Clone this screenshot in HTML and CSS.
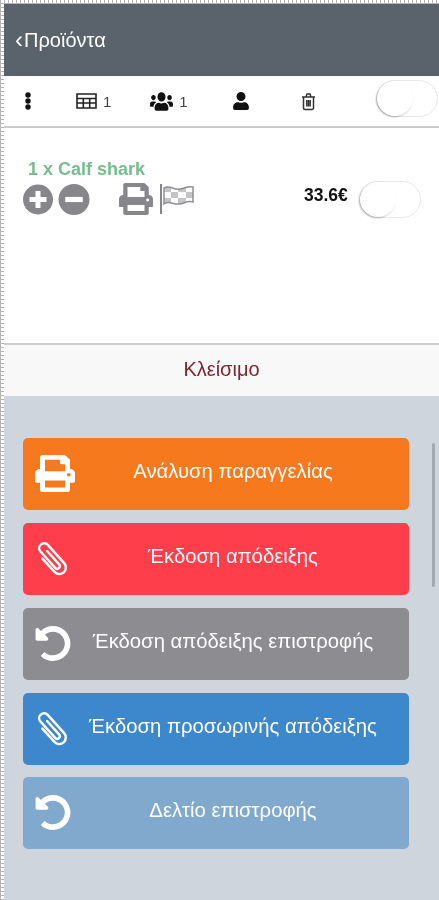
FILE: index.html
```html
<!DOCTYPE html>
<html lang="el">
<head>
  <meta charset="UTF-8">
  <meta name="viewport" content="width=device-width, initial-scale=1.0">
  <title>Προϊόντα</title>
  <link rel="stylesheet" href="styles.css">
</head>
<body>
  <svg class="sprites" width="0" height="0">
    <symbol id="i-print" viewBox="0 0 512 512" preserveAspectRatio="none">
      <path d="M448 192V77.25c0-8.49-3.37-16.62-9.37-22.63L393.37 9.37c-6-6-14.14-9.37-22.63-9.37H96C78.33 0 64 14.33 64 32v160c-35.35 0-64 28.65-64 64v112c0 8.84 7.16 16 16 16h48v96c0 17.67 14.33 32 32 32h320c17.67 0 32-14.33 32-32v-96h48c8.84 0 16-7.16 16-16V256c0-35.35-28.65-64-64-64zm-64 256H128v-96h256v96zm0-224H128V64h192v48c0 8.84 7.16 16 16 16h48v96zm48 72c-13.25 0-24-10.75-24-24 0-13.26 10.75-24 24-24s24 10.74 24 24c0 13.25-10.75 24-24 24z"/>
    </symbol>
    <symbol id="i-undo" viewBox="0 0 512 512">
      <path d="M255.545 8c-66.269.119-126.438 26.233-170.86 68.685L48.971 40.971C33.851 25.851 8 36.559 8 57.941V192c0 13.255 10.745 24 24 24h134.059c21.382 0 32.09-25.851 16.971-40.971l-41.75-41.75c30.864-28.899 70.801-44.907 113.23-45.273 92.398-.798 170.283 73.977 169.484 169.442C423.236 348.009 349.816 424 256 424c-41.127 0-79.997-14.678-110.63-41.556-4.743-4.161-11.906-3.908-16.368.553L89.34 422.659c-4.872 4.872-4.631 12.815.482 17.433C133.798 479.813 192.074 504 256 504c136.966 0 247.999-111.033 248-247.998C504.001 119.193 392.354 7.755 255.545 8z"/>
    </symbol>
    <symbol id="i-clip" viewBox="0 1 44 44">
      <g transform="rotate(-42 22 23) translate(4 4)" fill="none" stroke="currentColor" stroke-width="3" stroke-linecap="round">
        <path d="M20.500 9V31a3.200 3.200 0 0 1-6.400 0V4a6 6 0 0 1 12 0V34a8 8 0 0 1-16 0V12"/>
      </g>
    </symbol>
    <clipPath id="flag-shape">
      <path d="M5 5c6-4 10 3 16 1 5-1 9-3 13-2v15c-6-2-9 2-14 2-6 1-10-4-15 0z"/>
    </clipPath>
  </svg>

  <div class="app">
    <header class="topbar">
      <span class="back-arrow">‹</span><span class="back">Προϊόντα</span>
    </header>

    <div class="toolbar">
      <svg class="ic-dots" viewBox="0 0 6 18"><circle cx="3" cy="3" r="2.700"/><circle cx="3" cy="9" r="2.700"/><circle cx="3" cy="15" r="2.700"/></svg>
      <span class="tool tool-table">
        <svg class="ic-table" viewBox="0 0 21 16"><path d="M1 1h19v14H1zM1 5.500h19M1 10h19M7.300 5.500V15M13.700 5.500V15"/></svg>
        <span class="count">1</span>
      </span>
      <span class="tool tool-users">
        <svg class="ic-users" viewBox="0 0 640 512" preserveAspectRatio="none"><path d="M96 224c35.300 0 64-28.700 64-64s-28.700-64-64-64-64 28.700-64 64 28.700 64 64 64zm448 0c35.300 0 64-28.700 64-64s-28.700-64-64-64-64 28.700-64 64 28.700 64 64 64zm32 32h-64c-17.600 0-33.500 7.100-45.100 18.600 40.300 22.100 68.900 62 75.100 109.400h66c17.700 0 32-14.300 32-32v-32c0-35.300-28.700-64-64-64zm-256 0c61.900 0 112-50.100 112-112S381.900 32 320 32 208 82.100 208 144s50.100 112 112 112zm76.800 32h-8.300c-20.800 10-43.900 16-68.500 16s-47.600-6-68.500-16h-8.300C179.600 288 128 339.600 128 403.200V432c0 26.500 21.500 48 48 48h288c26.500 0 48-21.500 48-48v-28.800c0-63.600-51.600-115.200-115.200-115.200zm-223.700-13.400C161.500 263.100 145.600 256 128 256H64c-35.300 0-64 28.700-64 64v32c0 17.700 14.300 32 32 32h65.900c6.300-47.400 34.900-87.300 75.200-109.400z"/></svg>
        <span class="count">1</span>
      </span>
      <svg class="ic-user" viewBox="0 0 448 512"><path d="M224 256c70.700 0 128-57.300 128-128S294.700 0 224 0 96 57.300 96 128s57.300 128 128 128zm89.600 32h-16.700c-22.200 10.200-46.900 16-72.900 16s-50.600-5.800-72.900-16h-16.700C60.200 288 0 348.200 0 422.400V464c0 26.500 21.500 48 48 48h352c26.500 0 48-21.500 48-48v-41.600c0-74.200-60.200-134.400-134.400-134.400z"/></svg>
      <svg class="ic-trash" viewBox="0 0 15 18"><path d="M1 4.500h13M5 4.500l1-3h3l1 3M2.500 4.500v11a1.500 1.500 0 0 0 1.500 1.500h7a1.500 1.500 0 0 0 1.500-1.500v-11M5.800 7.500v6.500M7.500 7.500v6.500M9.200 7.500v6.500"/></svg>
      <div class="switch switch-top"><span class="knob"></span></div>
    </div>

    <section class="order">
      <div class="order-row">
        <div class="order-left">
          <div class="item-name">1 x Calf shark</div>
          <div class="item-actions">
            <svg class="ic-round" viewBox="0 0 30 30"><circle cx="15" cy="15" r="15"/><path class="glyph" d="M12.500 6.500h5v6h6v5h-6v6h-5v-6h-6v-5h6z"/></svg>
            <svg class="ic-round ic-minus" viewBox="0 0 30 30"><circle cx="15" cy="15" r="15"/><path class="glyph" d="M6.500 12.500h17v5h-17z"/></svg>
            <svg class="ic-print"><use href="#i-print"/></svg>
            <svg class="ic-flag" viewBox="0 0 36 32">
              <path class="flag-pole" d="M2 1v30"/>
              <g clip-path="url(#flag-shape)" class="flag-checks">
                <path d="M5 3h7v6H5zM19 3h8v6h-8zM12 9h7v6h-7zM27 9h7v6h-7zM5 15h7v7H5zM19 15h8v7h-8z"/>
              </g>
              <path class="flag-cloth" d="M5 5c6-4 10 3 16 1 5-1 9-3 13-2v15c-6-2-9 2-14 2-6 1-10-4-15 0z"/>
            </svg>
          </div>
        </div>
        <span class="price">33.6€</span>
        <div class="switch switch-row"><span class="knob"></span></div>
      </div>
    </section>

    <div class="close-bar">Κλείσιμο</div>

    <section class="actions">
      <div class="action-list">
        <a class="action action-orange"><svg class="action-icon icon-wide"><use href="#i-print"/></svg><span class="action-label">Ανάλυση παραγγελίας</span></a>
        <a class="action action-red"><svg class="action-icon icon-clip"><use href="#i-clip"/></svg><span class="action-label">Έκδοση απόδειξης</span></a>
        <a class="action action-grey"><svg class="action-icon"><use href="#i-undo"/></svg><span class="action-label">Έκδοση απόδειξης επιστροφής</span></a>
        <a class="action action-blue"><svg class="action-icon icon-clip"><use href="#i-clip"/></svg><span class="action-label">Έκδοση προσωρινής απόδειξης</span></a>
        <a class="action action-light"><svg class="action-icon"><use href="#i-undo"/></svg><span class="action-label">Δελτίο επιστροφής</span></a>
      </div>
      <div class="scroll-thumb"></div>
    </section>
  </div>
</body>
</html>
```

FILE: styles.css
```css
/* General */
* {
  box-sizing: border-box;
}

html, body {
  height: 100%;
}

body {
  margin: 0;
  padding: 4px 0 0 4px;
  font-family: "Liberation Sans", Arial, sans-serif;
  overflow: hidden;
  background-color: #fff;
  background-image:
    repeating-linear-gradient(90deg, #b5b5b5 0 1px, transparent 1px 4px),
    repeating-linear-gradient(0deg, #b5b5b5 0 1px, transparent 1px 4px);
}

.sprites {
  position: absolute;
}

.app {
  height: 896px;
  display: flex;
  flex-direction: column;
  background-color: #fff;
  filter: blur(0.6px);
}

/* Header */
.topbar {
  height: 72px;
  flex: none;
  display: flex;
  align-items: center;
  padding-left: 11px;
  background-color: #5a636b;
  color: #fff;
  font-size: 20px;
}

.back-arrow {
  font-size: 24px;
  margin-right: 1px;
}

/* Toolbar */
.toolbar {
  height: 52px;
  flex: none;
  display: flex;
  align-items: center;
  border-bottom: 2px solid #ccc;
  color: #111;
  fill: #111;
}

.tool {
  display: flex;
  align-items: center;
}

.count {
  font-size: 15px;
  color: #444;
}

.ic-dots {
  width: 6px;
  height: 18px;
  margin-left: 21px;
}

.tool-table {
  margin-left: 45px;
}

.ic-table {
  width: 21px;
  height: 16px;
  margin-right: 6px;
  fill: none;
  stroke: #222;
  stroke-width: 1.600;
}

.tool-users {
  margin-left: 39px;
}

.ic-users {
  width: 23px;
  height: 21px;
  margin-right: 6px;
}

.ic-user {
  width: 16px;
  height: 18px;
  margin-left: 45px;
}

.ic-trash {
  width: 15px;
  height: 19px;
  margin-left: 52px;
  fill: none;
  stroke: #333;
  stroke-width: 1.500;
}

/* Switch */
.switch {
  flex: none;
  width: 62px;
  height: 37px;
  border-radius: 19px;
  background-color: #fff;
  border: 1px solid #e8e8e8;
  display: flex;
}

.knob {
  width: 36px;
  height: 35px;
  border-radius: 50%;
  background-color: #fff;
  box-shadow: -1px 1px 2px rgba(0, 0, 0, 0.28);
}

.switch-top {
  margin-left: 60px;
  margin-top: -6px;
}

/* Order row */
.order {
  height: 217px;
  flex: none;
  border-bottom: 2px solid #ccc;
}

.order-row {
  display: flex;
  align-items: flex-start;
  padding: 31px 0 0 19px;
}

.order-left {
  width: 281px;
  flex: none;
}

.item-name {
  margin-left: 5px;
  font-size: 18px;
  font-weight: bold;
  color: #76bd8e;
}

.item-actions {
  display: flex;
  align-items: center;
  margin-top: 3px;
  color: #86868b;
  fill: #86868b;
}

.ic-round {
  width: 30px;
  height: 31px;
}

.ic-minus {
  margin-left: 5px;
  width: 32px;
}

.glyph {
  fill: #fff;
}

.ic-print {
  width: 34px;
  height: 32px;
  margin-left: 29px;
}

.ic-flag {
  width: 36px;
  height: 32px;
  margin-left: 6px;
}

.flag-pole {
  fill: none;
  stroke: #86868b;
  stroke-width: 2;
}

.flag-checks {
  fill: #c4c4c8;
}

.flag-cloth {
  fill: none;
  stroke: #8f8f95;
  stroke-width: 1.500;
}

.price {
  margin-top: 26px;
  font-size: 17.500px;
  font-weight: bold;
  color: #111;
}

.switch-row {
  margin: 22px 0 0 11px;
}

/* Close button */
.close-bar {
  height: 51px;
  flex: none;
  display: flex;
  align-items: center;
  justify-content: center;
  padding-bottom: 2px;
  background-color: #f8f8f8;
  font-size: 20px;
  color: #7e2633;
}

/* Action buttons */
.actions {
  flex: 1;
  display: flex;
  align-items: flex-start;
  padding: 42px 0 0 19px;
  background-color: #cfd5dc;
}

.action-list {
  width: 386px;
  flex: none;
  display: flex;
  flex-direction: column;
  gap: 13px;
}

.action {
  height: 72px;
  display: flex;
  align-items: center;
  padding-left: 12px;
  border-radius: 5px;
  color: #fff;
  text-decoration: none;
}

.action-icon {
  width: 36px;
  height: 37px;
  flex: none;
  margin-top: -2px;
  fill: currentColor;
}

.icon-wide {
  width: 40px;
  margin-right: -4px;
}

.icon-clip {
  margin-left: -2px;
  margin-right: 2px;
}

.action-label {
  flex: 1;
  margin-left: -14px;
  padding-bottom: 6px;
  text-align: center;
  font-size: 20.300px;
}

.action-orange { background-color: #f67a1d; }
.action-red { background-color: #fe3f4b; }
.action-grey { background-color: #8c8c91; }
.action-blue { background-color: #3d88cc; }
.action-light { background-color: #81a9cd; margin-top: -1px; }

.scroll-thumb {
  width: 3px;
  height: 144px;
  margin: 5px 0 0 23px;
  background-color: #a3a9b0;
  border-radius: 2px;
}
```
